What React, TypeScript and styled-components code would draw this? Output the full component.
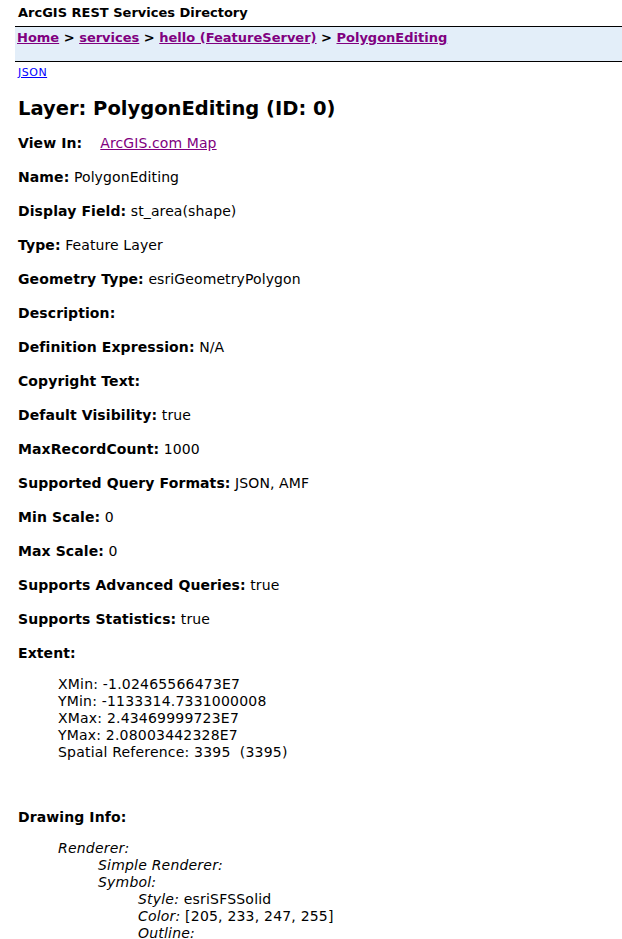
import styled, { createGlobalStyle } from "styled-components";

const GlobalStyle = createGlobalStyle`
  html, body {
    margin: 0;
    padding: 0;
    background: #ffffff;
  }
  body {
    font-family: "DejaVu Sans", Verdana, sans-serif;
    font-size: 14px;
    color: #000000;
  }
`;

const fields: [string, string][] = [
  ["Name:", "PolygonEditing"],
  ["Display Field:", "st_area(shape)"],
  ["Type:", "Feature Layer"],
  ["Geometry Type:", "esriGeometryPolygon"],
  ["Description:", ""],
  ["Definition Expression:", "N/A"],
  ["Copyright Text:", ""],
  ["Default Visibility:", "true"],
  ["MaxRecordCount:", "1000"],
  ["Supported Query Formats:", "JSON, AMF"],
  ["Min Scale:", "0"],
  ["Max Scale:", "0"],
  ["Supports Advanced Queries:", "true"],
  ["Supports Statistics:", "true"],
];

const extent = [
  "XMin: -1.02465566473E7",
  "YMin: -1133314.7331000008",
  "XMax: 2.43469999723E7",
  "YMax: 2.08003442328E7",
  "Spatial Reference: 3395\u00a0 (3395)",
];

const App = () => {
  return (
    <StPage>
      <GlobalStyle />
      <StTitle>ArcGIS REST Services Directory</StTitle>
      <StBreadcrumbs>
        <StCrumb href="#">Home</StCrumb> &gt; <StCrumb href="#">services</StCrumb>{" "}
        &gt; <StCrumb href="#">hello (FeatureServer)</StCrumb> &gt;{" "}
        <StCrumb href="#">PolygonEditing</StCrumb>
      </StBreadcrumbs>
      <StContent>
        <StFormats>
          <a href="#">JSON</a>
        </StFormats>
        <StHeading>Layer: PolygonEditing (ID: 0)</StHeading>
        <StField>
          <b>View In:</b>
          <StViewLink href="#">ArcGIS.com Map</StViewLink>
        </StField>
        {fields.map(([label, value]) => (
          <StField key={label}>
            <b>{label}</b> {value}
          </StField>
        ))}
        <StField $tight>
          <b>Extent:</b>
        </StField>
        <StList>
          {extent.map((line) => (
            <StLine key={line}>{line}</StLine>
          ))}
        </StList>
        <StField $tight>
          <b>Drawing Info:</b>
        </StField>
        <StList>
          <StLine>
            <i>Renderer:</i>
          </StLine>
          <StNested>
            <StLine>
              <i>Simple Renderer:</i>
            </StLine>
            <StLine>
              <i>Symbol:</i>
            </StLine>
            <StNested>
              <StLine>
                <i>Style:</i> esriSFSSolid
              </StLine>
              <StLine>
                <i>Color:</i> [205, 233, 247, 255]
              </StLine>
              <StLine>
                <i>Outline:</i>
              </StLine>
            </StNested>
          </StNested>
        </StList>
      </StContent>
    </StPage>
  );
};

export default App;

const StPage = styled.div`
  padding-left: 15px;
  overflow: hidden;
`;

const StTitle = styled.div`
  font-weight: bold;
  font-size: 13px;
  line-height: 16px;
  padding: 5px 0 0 3px;
  margin-bottom: 5px;
`;

const StBreadcrumbs = styled.div`
  box-sizing: border-box;
  height: 36px;
  border-top: 1px solid #000;
  border-bottom: 1px solid #000;
  background-color: #e3eef9;
  font-weight: bold;
  font-size: 13px;
  line-height: 16px;
  padding: 3px 0 0 2px;
  margin-right: -20px;
`;

const StCrumb = styled.a`
  color: #800080;
`;

const StContent = styled.div`
  padding-left: 3px;
`;

const StFormats = styled.div`
  font-size: 11px;
  line-height: 12px;
  letter-spacing: 0.5px;
  margin-top: 5px;

  & a {
    color: #0000ff;
  }
`;

const StHeading = styled.h2`
  font-size: 19.5px;
  line-height: 24px;
  font-weight: bold;
  margin: 18px 0 14px;
`;

const StField = styled.div<{ $tight?: boolean }>`
  line-height: 17px;
  letter-spacing: 0.1px;
  margin-bottom: ${(p) => (p.$tight ? "14px" : "17px")};
`;

const StViewLink = styled.a`
  color: #800080;
  margin-left: 18px;
`;

const StList = styled.ul`
  list-style: none;
  margin: 0 0 48px;
  padding-left: 40px;
`;

const StNested = styled.ul`
  list-style: none;
  margin: 0;
  padding-left: 40px;
`;

const StLine = styled.li`
  line-height: 17px;
  letter-spacing: 0.2px;
`;
